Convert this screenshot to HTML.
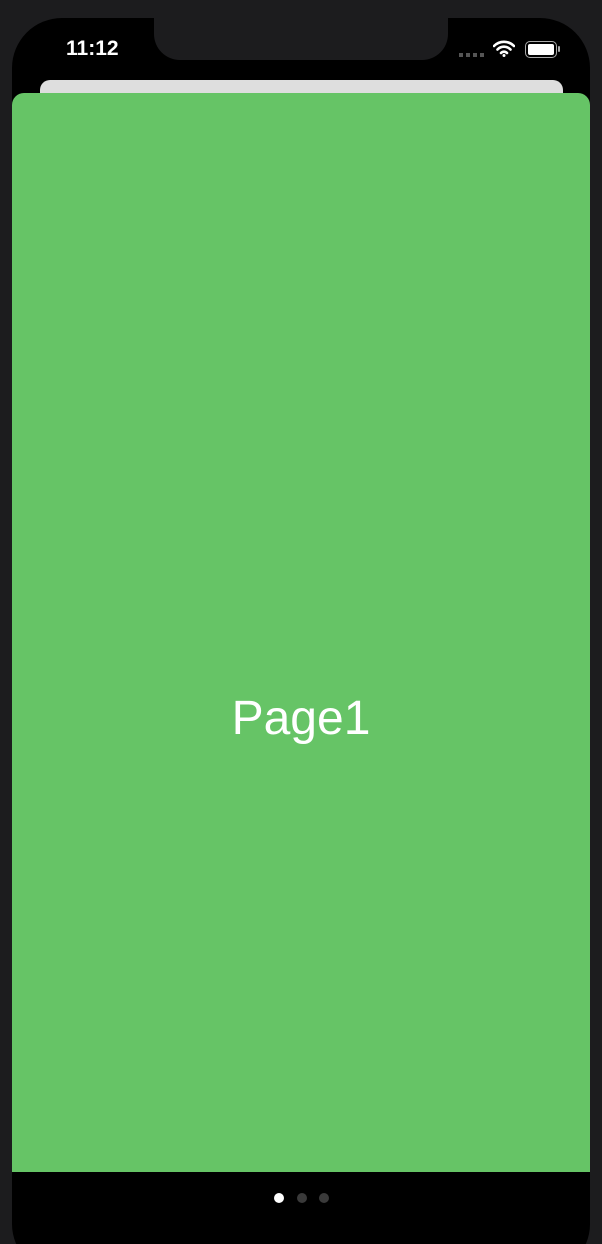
<!DOCTYPE html>
<html style="overflow:hidden;width:602px;height:1244px"><head><style>
*{margin:0;padding:0;box-sizing:border-box}
body{width:602px;height:1244px;background:#1c1c1e;position:relative;overflow:hidden;font-family:"Liberation Sans",sans-serif}
.screen{position:absolute;left:12px;top:18px;width:578px;height:1256px;background:#000;border-radius:50px}
.notch{position:absolute;left:154px;top:10px;width:294px;height:50px;background:#1c1c1e;border-radius:0 0 26px 26px}
.time{position:absolute;left:66px;top:37px;color:#fff;font-size:21px;font-weight:bold}
.gray{position:absolute;left:40px;top:80px;width:523px;height:40px;background:#dedede;border-radius:10px}
.green{position:absolute;left:12px;top:93px;width:578px;height:1079px;background:#66c466;border-radius:12px 12px 0 0}
.t{position:absolute;left:0;width:602px;top:691px;text-align:center;color:#fff;font-size:48px}
.dot{position:absolute;top:1193px;width:10px;height:10px;border-radius:50%;background:#3a3a3a}
</style></head><body>
<div class="screen"></div>
<div class="notch"></div>
<div class="time">11:12</div>
<div style="position:absolute;left:459px;top:53px;width:26px;height:4px;background:repeating-linear-gradient(90deg,#555 0 4px,transparent 4px 7px)"></div>
<svg style="position:absolute;left:493px;top:40px" width="22" height="17" viewBox="0 0 22 17"><path d="M1 6a14 14 0 0 1 20 0M4.5 9.5a9 9 0 0 1 13 0M8 13a4 4 0 0 1 6 0" stroke="#fff" stroke-width="2.6" fill="none" stroke-linecap="round"/><circle cx="11" cy="15.5" r="1.5" fill="#fff"/></svg>
<div style="position:absolute;left:525px;top:41px;width:32px;height:17px;border:1.5px solid #aaa;border-radius:5px;padding:2px"><div style="width:100%;height:100%;background:#fff;border-radius:2px"></div></div>
<div style="position:absolute;left:558px;top:46px;width:2px;height:6px;background:#aaa;border-radius:1px"></div>
<div class="gray"></div>
<div class="green"></div>
<div class="t">Page1</div>
<div class="dot" style="left:274px;background:#fff"></div>
<div class="dot" style="left:297px"></div>
<div class="dot" style="left:319px"></div>
</body></html>
